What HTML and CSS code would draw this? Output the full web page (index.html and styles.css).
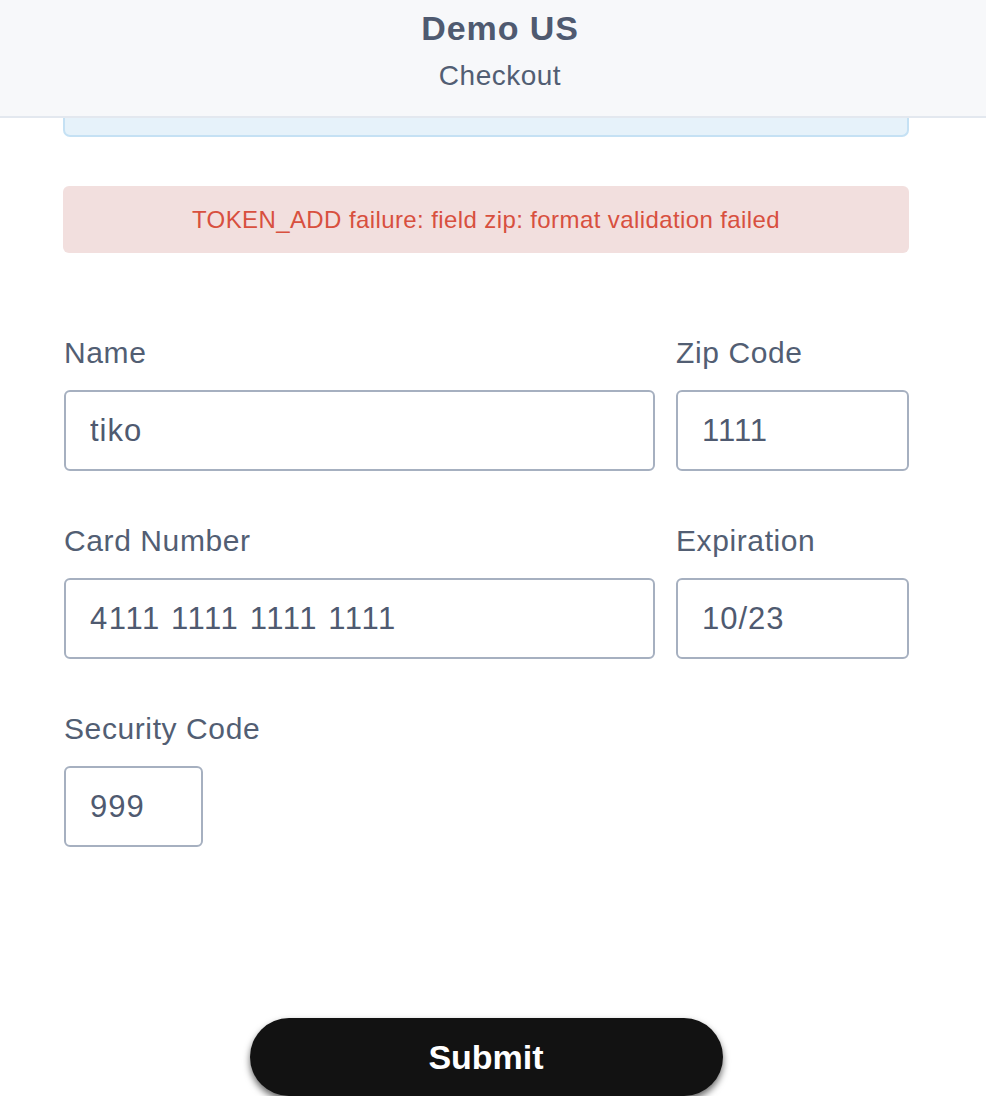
FILE: index.html
```html
<!DOCTYPE html>
<html>
<head>
<meta charset="utf-8">
<link rel="stylesheet" href="styles.css">
</head>
<body>
<header class="topbar">
  <div class="title">Demo US</div>
  <div class="subtitle">Checkout</div>
</header>
<main class="content">
  <div class="info-stub"></div>
  <div class="alert">TOKEN_ADD failure: field zip: format validation failed</div>
  <form class="form">
    <div class="field">
      <label class="label">Name</label>
      <input class="input" type="text" value="tiko">
    </div>
    <div class="field">
      <label class="label">Zip Code</label>
      <input class="input" type="text" value="1111">
    </div>
    <div class="field">
      <label class="label">Card Number</label>
      <input class="input input-card" type="text" value="4111 1111 1111 1111">
    </div>
    <div class="field">
      <label class="label">Expiration</label>
      <input class="input" type="text" value="10/23">
    </div>
    <div class="field">
      <label class="label">Security Code</label>
      <input class="input input-cvv" type="text" value="999">
    </div>
  </form>
  <div class="actions">
    <button class="submit" type="button">Submit</button>
  </div>
</main>
</body>
</html>
```
FILE: styles.css
```css
html, body {
  margin: 0;
  padding: 0;
  background: #ffffff;
  font-family: "Liberation Sans", Arial, sans-serif;
  color: #4a5568;
}

.topbar {
  height: 118px;
  box-sizing: border-box;
  background: #f7f8fa;
  border-bottom: 2px solid #e3e8ef;
  display: flex;
  flex-direction: column;
  align-items: center;
  padding-left: 14px;
}

.title {
  margin-top: 8px;
  font-size: 34px;
  font-weight: bold;
  line-height: 40px;
  color: #4f5a70;
  letter-spacing: 0.9px;
}

.subtitle {
  margin-top: 12px;
  font-size: 28px;
  line-height: 32px;
  color: #525e73;
  letter-spacing: 0.5px;
}

.content {
  padding: 0 77px 0 63px;
}

.info-stub {
  height: 19px;
  box-sizing: border-box;
  background: #e6f2fa;
  border: 2px solid #c5e1f4;
  border-top: none;
  border-radius: 0 0 7px 7px;
}

.alert {
  margin-top: 49px;
  height: 67px;
  background: #f2dfde;
  border-radius: 6px;
  color: #d8503f;
  font-size: 24px;
  letter-spacing: 0.4px;
  display: flex;
  align-items: center;
  justify-content: center;
}

.form {
  margin-top: 82px;
  margin-left: 1px;
  display: grid;
  grid-template-columns: 1fr 233px;
  column-gap: 21px;
  row-gap: 52px;
}

.field {
  display: flex;
  flex-direction: column;
  align-items: flex-start;
}

.label {
  font-size: 30px;
  line-height: 36px;
  letter-spacing: 0.6px;
  color: #525e73;
  margin-bottom: 19px;
}

.input {
  width: 100%;
  height: 81px;
  box-sizing: border-box;
  border: 2px solid #a6b0c0;
  border-radius: 6px;
  padding: 0 0 0 24px;
  font-family: "Liberation Sans", Arial, sans-serif;
  font-size: 31px;
  letter-spacing: 1px;
  color: #4f5a70;
  background: #ffffff;
  outline: none;
}

.input-card {
  letter-spacing: 1.6px;
}

.input-cvv {
  width: 139px;
}

.actions {
  margin-top: 171px;
  display: flex;
  justify-content: center;
}

.submit {
  width: 473px;
  height: 78px;
  border: none;
  border-radius: 39px;
  background: #121212;
  color: #ffffff;
  font-family: "Liberation Sans", Arial, sans-serif;
  font-size: 34px;
  font-weight: bold;
  box-shadow: 0 4px 7px rgba(0, 0, 0, 0.6);
}
```
